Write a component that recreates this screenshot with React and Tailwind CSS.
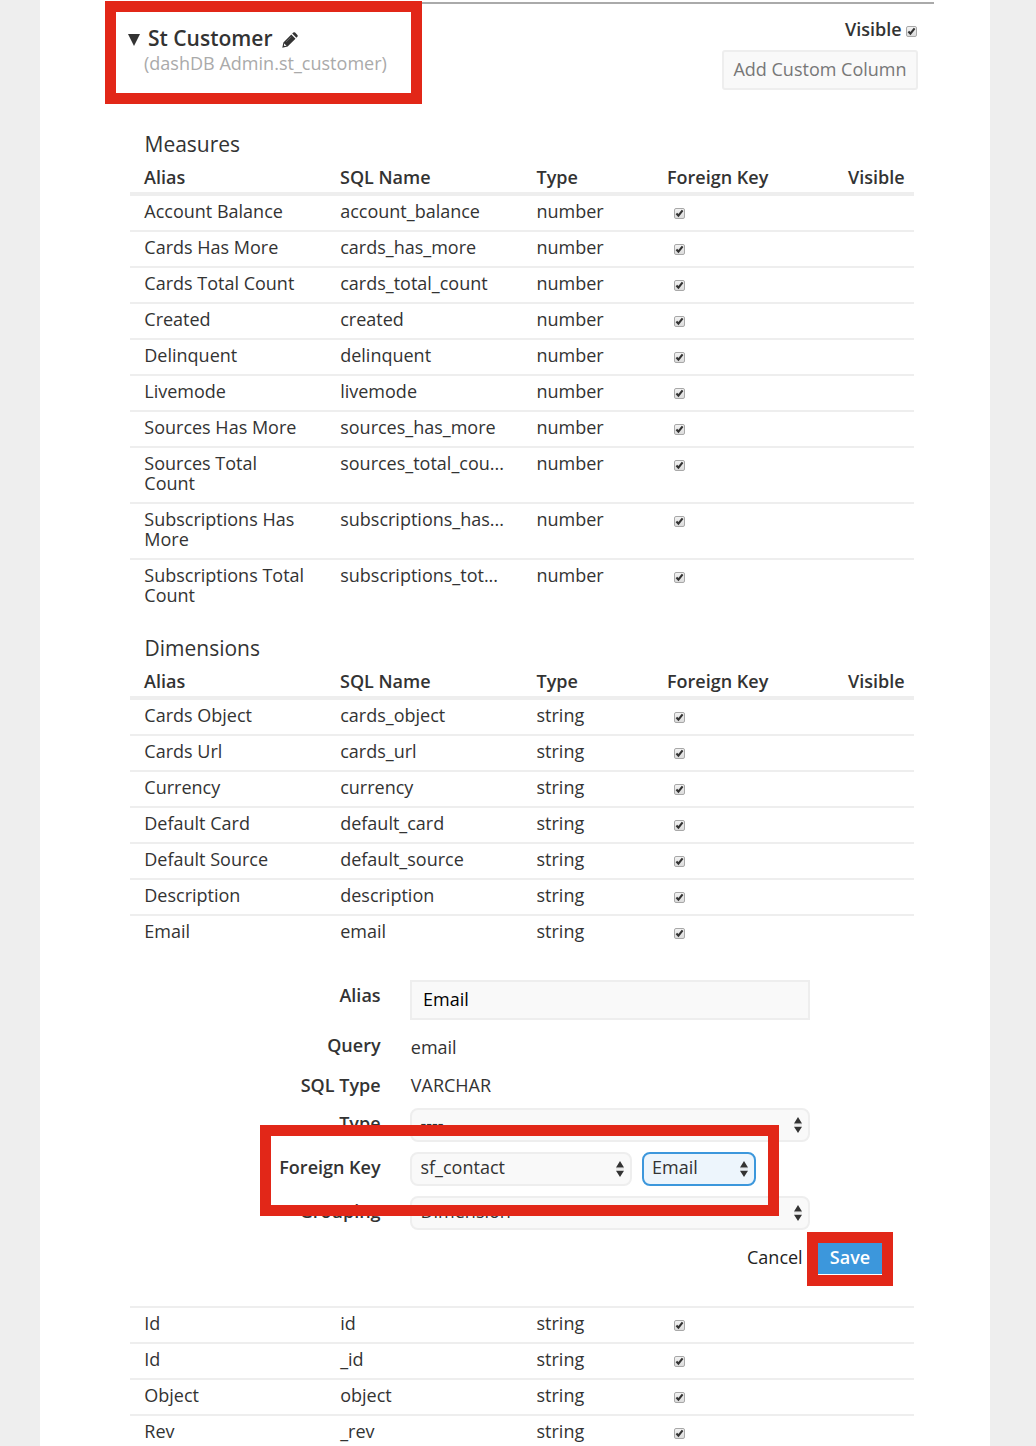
import React from "react";

const measures = [
  ["Account Balance", "account_balance"],
  ["Cards Has More", "cards_has_more"],
  ["Cards Total Count", "cards_total_count"],
  ["Created", "created"],
  ["Delinquent", "delinquent"],
  ["Livemode", "livemode"],
  ["Sources Has More", "sources_has_more"],
  ["Sources Total Count", "sources_total_cou..."],
  ["Subscriptions Has More", "subscriptions_has..."],
  ["Subscriptions Total Count", "subscriptions_tot..."],
];

const dimensions = [
  ["Cards Object", "cards_object"],
  ["Cards Url", "cards_url"],
  ["Currency", "currency"],
  ["Default Card", "default_card"],
  ["Default Source", "default_source"],
  ["Description", "description"],
  ["Email", "email"],
];

const moreDimensions = [
  ["Id", "id"],
  ["Id", "_id"],
  ["Object", "object"],
  ["Rev", "_rev"],
];

function Check() {
  return (
    <span className="block h-[11px] w-[11px] shrink-0 rounded-[2px] border border-[#a8a8a8] bg-linear-to-b from-[#f2f2f2] to-[#dcdcdc]">
      <svg viewBox="0 0 9 9" className="block h-[9px] w-[9px]" fill="none" stroke="#333" strokeWidth="2.1">
        <path d="M1.4 4.6 L3.4 6.6 L7.6 1.3" />
      </svg>
    </span>
  );
}

const columns = "grid grid-cols-[196px_196px_131px_181px_1fr] pl-[14px]";

function Row({ row, type, last }) {
  return (
    <div className={`${columns} pt-[5px] ${last ? "pb-[11px]" : "border-b-2 border-[#eeeeee] pb-[9px]"}`}>
      <div className="w-[164px] pl-[0.3px] leading-5">{row[0]}</div>
      <div className="pl-[0.2px] leading-5 whitespace-nowrap">{row[1]}</div>
      <div className="pl-[0.5px] leading-5">{type}</div>
      <div className="pt-[7px] pl-[7px]">
        <Check />
      </div>
    </div>
  );
}

function Section({ title, rows, type }) {
  return (
    <section>
      <h2 className="h-[34px] pl-[14.5px] text-[21px] leading-[30px]">{title}</h2>
      <div className={`${columns} h-[33px] border-b-4 border-[#eeeeee] font-semibold leading-[28px]`}>
        <div>Alias</div>
        <div>SQL Name</div>
        <div className="pl-[0.5px]">Type</div>
        <div>Foreign Key</div>
        <div>Visible</div>
      </div>
      {rows.map((r, i) => (
        <Row key={i} row={r} type={type} last={i === rows.length - 1} />
      ))}
    </section>
  );
}

function Select({ children, className }) {
  return (
    <div className={`flex h-[34px] items-center justify-between rounded-[8px] border-2 pr-[6px] pl-[8.5px] ${className}`}>
      <span className="pb-1">{children}</span>
      <svg viewBox="0 0 8 16" className="h-4 w-2" fill="#333">
        <path d="M4 0 L8 6.5 H0 Z M4 16 L8 9.7 H0 Z" />
        <path d="M0 7.5 H8 V8.3 H0 Z" fill="#d5d5d5" />
      </svg>
    </div>
  );
}

function Field({ label, className, children }) {
  return (
    <div className={`flex ${className}`}>
      <div className="w-[250.6px] text-right font-semibold leading-[30px]">{label}</div>
      <div className="ml-[29.4px] flex">{children}</div>
    </div>
  );
}

const plain = "border-[#eeeeee] bg-[#f9f9f9]";

export default function App() {
  return (
    <div className="h-[1446px] w-[1036px] overflow-hidden bg-[#eeeeee] pr-[46px] pl-10 font-['Open_Sans',sans-serif] text-[18px] text-[#333333]">
      <main className="relative h-[1446px] overflow-hidden bg-white pr-[76px] pl-[90px]">
        <header className="-mr-5 -ml-5 flex h-[129px] justify-between pt-[2px]">
          <div className="flex w-full justify-between border-t-2 border-[#aaaaaa] pr-[16px] pl-[18px]">
            <div>
              <div className="flex h-[47px] items-end">
                <svg viewBox="0 0 12 12" className="mb-[5px] h-3 w-3" fill="#333">
                  <path d="M0 0 H12 L6 12 Z" />
                </svg>
                <h1 className="ml-[8px] text-[21px] leading-[26px] font-semibold">St Customer</h1>
                <svg viewBox="0 0 16 16" className="mb-[3px] ml-[9px] h-4 w-4" fill="#333">
                  <path d="M0.3 15.7 L1.4 10.4 L9.3 2.5 L13.5 6.7 L5.6 14.6 Z M10.2 1.6 L11.3 0.6 Q12.2 -0.1 13.1 0.6 L15.4 2.9 Q16.1 3.8 15.4 4.7 L14.4 5.8 Z" />
                  <path d="M2.3 11.5 L4.5 13.7 L2.6 14.1 L1.9 13.4 Z" fill="#fff" />
                  <path d="M4.2 9.9 L9.4 4.7" stroke="#999" strokeWidth="0.5" />
                </svg>
              </div>
              <p className="pl-4 text-[18.05px] leading-[24px] text-[#aaaaaa]">(dashDB Admin.st_customer)</p>
            </div>
            <div className="flex flex-col items-end pt-[11px]">
              <div className="flex pr-px font-semibold leading-[28px]">
                Visible
                <div className="ml-[4.4px] pt-[11px]">
                  <Check />
                </div>
              </div>
              <button className="mt-[7px] h-10 w-[196px] rounded-[3px] border-2 border-[#eeeeee] bg-[#f9f9f9] pb-[2px] text-[18px] leading-[34px] text-[#777777]">
                Add Custom Column
              </button>
            </div>
          </div>
        </header>

        <Section title="Measures" rows={measures} type="number" />
        <div className="h-[17px]" />
        <Section title="Dimensions" rows={dimensions} type="string" />

        <form className="h-[356px] border-b-2 border-[#eeeeee] pt-[28px]">
          <Field label="Alias" className="h-[50px]">
            <div className="h-10 w-[400px] border-2 border-[#eeeeee] bg-[#f9f9f9] pl-[11px] leading-[35px] text-black">Email</div>
          </Field>
          <Field label="Query" className="h-10">
            <span className="pl-[0.8px] leading-[34px]">email</span>
          </Field>
          <Field label="SQL Type" className="h-[38px]">
            <span className="pl-[0.8px] leading-[30px]">VARCHAR</span>
          </Field>
          <Field label="Type" className="h-11">
            <Select className={`w-[400px] ${plain}`}>----</Select>
          </Field>
          <Field label="Foreign Key" className="h-11">
            <Select className={`w-[222px] ${plain}`}>sf_contact</Select>
            <Select className="ml-[10px] w-[114px] border-[#3c97dc] bg-[#edf5fc]">
              <span className="-ml-[0.5px]">Email</span>
            </Select>
          </Field>
          <Field label="Grouping" className="h-11">
            <Select className={`w-[400px] ${plain}`}>Dimension</Select>
          </Field>
          <div className="flex items-start pt-[3px] pl-[617px]">
            <span className="w-[71px] leading-[28px] text-[#222222]">Cancel</span>
            <span className="h-[31px] w-16 bg-[#3c97dc] text-center font-semibold leading-[28px] text-white">Save</span>
          </div>
        </form>

        {moreDimensions.map((r, i) => (
          <Row key={i} row={r} type="string" />
        ))}

        {/* Highlight frames lying over the page content */}
        <div className="absolute top-px left-[65px] h-[103px] w-[317px] border-[11px] border-[#e22718]" />
        <div className="absolute top-[1125px] left-[220px] h-[91px] w-[519px] border-[11px] border-[#e22718]" />
        <div className="absolute top-[1232px] left-[767px] h-[54px] w-[86px] border-[11px] border-[#e22718]" />
      </main>
    </div>
  );
}
